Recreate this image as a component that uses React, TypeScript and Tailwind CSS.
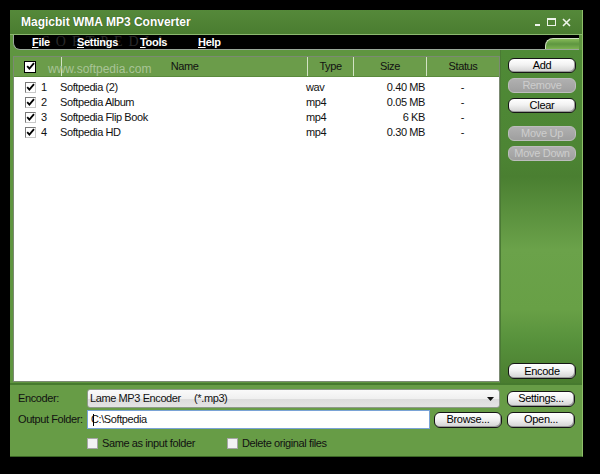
import React from "react";

const font = { fontFamily: '"Liberation Sans", Arial, sans-serif' };

function Check({ boxed = false }: { boxed?: boolean }) {
  return (
    <div
      className={
        boxed
          ? "w-[12px] h-[12px] bg-white border-[1.5px] border-black flex items-center justify-center"
          : "w-[11px] h-[11px] bg-white border border-t-[#7a7a7a] border-l-[#7a7a7a] border-r-[#c8c8c8] border-b-[#c8c8c8] flex items-center justify-center"
      }
    >
      <svg width="9" height="9" viewBox="0 0 9 9">
        <path d="M1.2 4.2 L3.4 6.6 L8 1.2" fill="none" stroke="#000" strokeWidth="1.8" />
      </svg>
    </div>
  );
}

function Btn({ label, disabled = false, w = "w-[68px]", h = "h-[15px]" }: { label: string; disabled?: boolean; w?: string; h?: string }) {
  return disabled ? (
    <div className={`${w} ${h} rounded-[6px] border border-[#bdbdbd] bg-[linear-gradient(#b0b0b0,#9f9f9f)] flex items-center justify-center text-[11px] leading-none text-[#cdcdcd] tracking-[-0.3px]`}>
      {label}
    </div>
  ) : (
    <div className={`${w} ${h} rounded-[6px] border-[1.5px] border-[#151515] bg-[linear-gradient(#ffffff_0%,#f2f2f2_45%,#d2d2d2_100%)] shadow-[inset_-1px_-1px_0_#9a9a9a] flex items-center justify-center text-[11px] leading-none text-black tracking-[-0.3px]`}>
      {label}
    </div>
  );
}

const rows = [
  { n: 1, name: "Softpedia (2)", type: "wav", size: "0.40 MB" },
  { n: 2, name: "Softpedia Album", type: "mp4", size: "0.05 MB" },
  { n: 3, name: "Softpedia Flip Book", type: "mp4", size: "6 KB" },
  { n: 4, name: "Softpedia HD", type: "mp4", size: "0.30 MB" },
];

export default function App() {
  return (
    <div className="w-[600px] h-[474px] bg-black pt-[10px] pl-[10px]" style={font}>
      <div className="w-[573px] h-[447px] flex flex-col bg-[#5f9540] border-b border-[#3c6526] border-r border-r-[#8fbf6a]">
        {/* Title bar */}
        <div className="h-[25px] flex items-center pl-[11px] pr-[11px] bg-[linear-gradient(#55893a,#4a7d30)] border-b border-[#8cb870]">
          <span className="text-white font-bold text-[12px] leading-none [text-shadow:0_0_1px_#2a4a1a]">Magicbit WMA MP3 Converter</span>
          <div className="ml-auto flex items-center gap-[6px]">
            <div className="w-[8px] h-[8px] flex items-end justify-center">
              <div className="w-[5px] h-[2px] bg-[#eef4ea]" />
            </div>
            <div className="w-[9px] h-[8px] border-[1.5px] border-[#eef4ea] border-t-[2.5px]" />
            <svg width="9" height="9" viewBox="0 0 9 9">
              <path d="M1 1 L8 8 M8 1 L1 8" stroke="#eef4ea" strokeWidth="1.6" />
            </svg>
          </div>
        </div>
        {/* Menu bar */}
        <div className="h-[15px] px-[3px]">
          <div className="relative h-full bg-black rounded-bl-[7px] border-l border-b border-[#9aa89a] flex items-center pl-[18px]">
            <span className="absolute left-[28px] top-[0px] text-[14px] tracking-[6px] text-[#2a2a2a] leading-none" style={{ fontFamily: '"Liberation Serif", serif' }}>
              SOFTPEDIA
            </span>
            <span className="relative w-[45px] text-white font-bold text-[11px] leading-none tracking-[-0.3px]"><u>F</u>ile</span>
            <span className="relative w-[63px] text-white font-bold text-[11px] leading-none tracking-[-0.3px]"><u>S</u>ettings</span>
            <span className="relative w-[58px] text-white font-bold text-[11px] leading-none tracking-[-0.3px]"><u>T</u>ools</span>
            <span className="relative text-white font-bold text-[11px] leading-none tracking-[-0.3px]"><u>H</u>elp</span>
            <div className="absolute right-0 bottom-0 w-[34px] h-[11px] rounded-tl-[8px] border-l border-t border-[#cfe2bf] bg-[linear-gradient(#86ba58,#5e9640_50%,#7cb250)]" />
          </div>
        </div>
        {/* Main */}
        <div className="h-[333px] flex">
          <div className="pl-[3px] pt-[6px]">
            <div className="relative w-[487px] h-[326px] bg-white border border-[#7b8a72] text-[11px] tracking-[-0.4px]">
              {/* header */}
              <div className="relative h-[20px] flex bg-[#6b9c4a] text-[#111] border-b border-[#5a8a3c]">
                <div className="w-[47px] flex items-center pl-[10px]">
                  <Check boxed />
                </div>
                <div className="w-[246px] flex items-center justify-center border-l border-[#d2e3c4]">Name</div>
                <div className="w-[46px] flex items-center justify-center border-l border-[#d2e3c4]">Type</div>
                <div className="w-[73px] flex items-center justify-center border-l border-[#d2e3c4]">Size</div>
                <div className="flex-1 flex items-center justify-center border-l border-[#d2e3c4]">Status</div>
                <span className="absolute left-[34px] top-[3px] text-[12px] text-[#a9c497] tracking-[0px]">www.softpedia.com</span>
              </div>
              <div className="pt-[3px]">
                {rows.map((r) => (
                  <div key={r.n} className="h-[15px] flex items-center text-[#111]">
                    <div className="w-[47px] flex items-center pl-[11px]">
                      <Check />
                      <span className="ml-[5px]">{r.n}</span>
                    </div>
                    <div className="w-[246px] -ml-[1px] pl-0">{r.name}</div>
                    <div className="w-[46px] pl-[0px]">{r.type}</div>
                    <div className="w-[73px] text-right pr-[1px] ml-[1px]">{r.size}</div>
                    <div className="flex-1 text-center">-</div>
                  </div>
                ))}
              </div>
            </div>
          </div>
          <div className="flex-1 flex flex-col pl-[7px] pt-[8px] pb-[4px] bg-[linear-gradient(#4f8a36_0%,#4d8534_30%,#4a7f31_38%,#6ba24a_60%,#68a046_78%,#56903b_88%,#4a7d2f_100%)] border-l border-[#4a7a34]">
            <Btn label="Add" />
            <div className="mt-[5px]"><Btn label="Remove" disabled /></div>
            <div className="mt-[5px]"><Btn label="Clear" /></div>
            <div className="mt-[13px]"><Btn label="Move Up" disabled /></div>
            <div className="mt-[5px]"><Btn label="Move Down" disabled /></div>
            <div className="mt-auto"><Btn label="Encode" h="h-[16px]" /></div>
          </div>
        </div>
        {/* Bottom panel */}
        <div className="flex-1 bg-[#679c46] border-t-2 border-[#467a2e] pt-[4px] pl-[8px] text-[11px] tracking-[-0.4px] text-[#111]">
          <div className="h-[19px] flex items-center">
            <span className="w-[69px]">Encoder:</span>
            <div className="relative w-[413px] h-[19px] rounded-[3px] border border-[#8f9a8a] bg-[linear-gradient(#fafafa_0%,#f0f0f0_50%,#dcdcdc_52%,#e4e4e4_100%)] flex items-center pl-[2px]">
              <span className="whitespace-pre">Lame MP3 Encoder     (*.mp3)</span>
              <svg className="absolute right-[5px] top-[7px]" width="7" height="4" viewBox="0 0 7 4">
                <path d="M0 0 L7 0 L3.5 4 Z" fill="#111" />
              </svg>
            </div>
            <div className="ml-[7px]"><Btn label="Settings..." h="h-[16px]" /></div>
          </div>
          <div className="h-[19px] mt-[2px] flex items-center">
            <span className="w-[69px]">Output Folder:</span>
            <div className="relative w-[343px] h-[19px] bg-white border border-[#7aa3d6] flex items-center pl-[3px]">
              <span>C:\Softpedia</span>
              <div className="absolute left-[5px] top-[3px] w-[1px] h-[12px] bg-black" />
            </div>
            <div className="ml-[4px]"><Btn label="Browse..." h="h-[16px]" /></div>
            <div className="ml-[5px]"><Btn label="Open..." h="h-[16px]" /></div>
          </div>
          <div className="mt-[6px] flex items-center pl-[69px]">
            <div className="w-[11px] h-[11px] bg-[#f2f2f2] border border-[#a6a6a6]" />
            <span className="ml-[4px] w-[125px]">Same as input folder</span>
            <div className="w-[11px] h-[11px] bg-[#f2f2f2] border border-[#a6a6a6]" />
            <span className="ml-[4px]">Delete original files</span>
          </div>
        </div>
      </div>
    </div>
  );
}
